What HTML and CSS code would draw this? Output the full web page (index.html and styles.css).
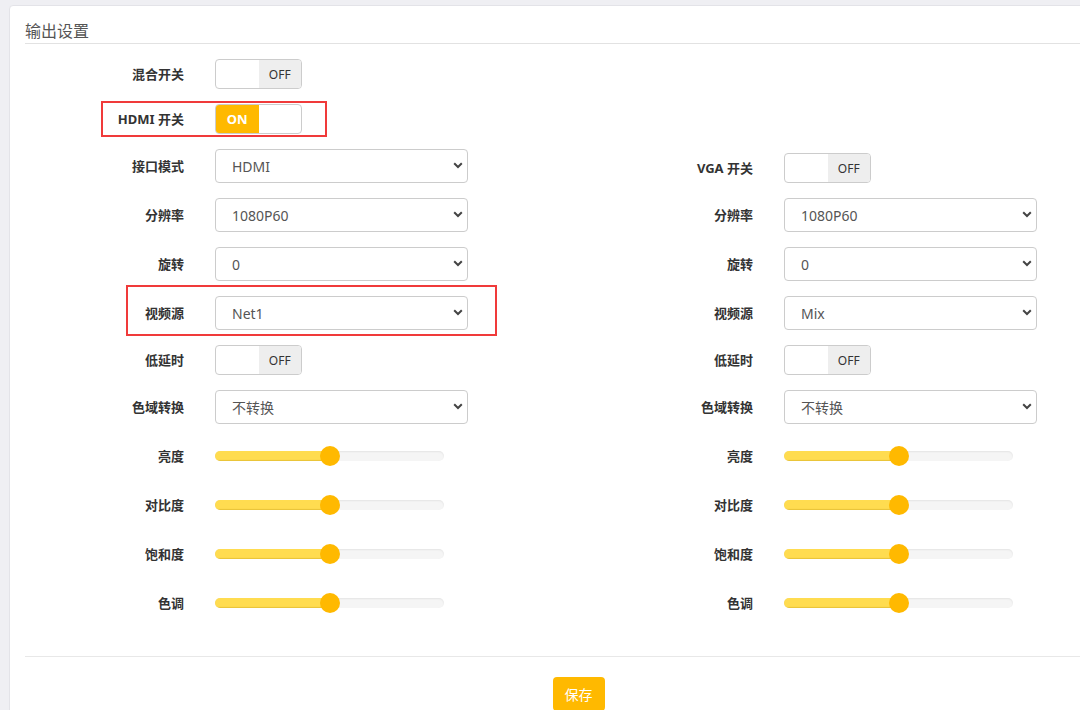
FILE: index.html
```html
<!DOCTYPE html>
<html>
	<head>
		<title>输出设置</title><meta charset="utf-8">
		<link rel="stylesheet" href="styles.css">
	</head>
	<body>
		<div class="card">
			<h4 class="card-title">输出设置</h4>

			<div class="form">
				<div class="row">
					<div class="field">
						<label>混合开关</label>
						<span class="switch"><span class="blank"></span><span class="off">OFF</span></span>
					</div>
				</div>

				<div class="row">
					<div class="field mark-hdmi">
						<label>HDMI 开关</label>
						<span class="switch"><span class="on">ON</span><span class="blank"></span></span>
					</div>
				</div>

				<div class="row">
					<div class="field">
						<label>接口模式</label>
						<div class="select-wrap">
							<select><option>HDMI</option></select>
							<svg class="chev" width="10" height="7" viewBox="0 0 10 7"><path d="M1.2 1.3 L5 5 L8.8 1.3" fill="none" stroke="#444" stroke-width="2"/></svg>
						</div>
					</div>
					<div class="field">
						<label>VGA 开关</label>
						<span class="switch"><span class="blank"></span><span class="off">OFF</span></span>
					</div>
				</div>

				<div class="row">
					<div class="field">
						<label>分辨率</label>
						<div class="select-wrap">
							<select><option>1080P60</option></select>
							<svg class="chev" width="10" height="7" viewBox="0 0 10 7"><path d="M1.2 1.3 L5 5 L8.8 1.3" fill="none" stroke="#444" stroke-width="2"/></svg>
						</div>
					</div>
					<div class="field">
						<label>分辨率</label>
						<div class="select-wrap">
							<select><option>1080P60</option></select>
							<svg class="chev" width="10" height="7" viewBox="0 0 10 7"><path d="M1.2 1.3 L5 5 L8.8 1.3" fill="none" stroke="#444" stroke-width="2"/></svg>
						</div>
					</div>
				</div>

				<div class="row">
					<div class="field">
						<label>旋转</label>
						<div class="select-wrap">
							<select><option>0</option></select>
							<svg class="chev" width="10" height="7" viewBox="0 0 10 7"><path d="M1.2 1.3 L5 5 L8.8 1.3" fill="none" stroke="#444" stroke-width="2"/></svg>
						</div>
					</div>
					<div class="field">
						<label>旋转</label>
						<div class="select-wrap">
							<select><option>0</option></select>
							<svg class="chev" width="10" height="7" viewBox="0 0 10 7"><path d="M1.2 1.3 L5 5 L8.8 1.3" fill="none" stroke="#444" stroke-width="2"/></svg>
						</div>
					</div>
				</div>

				<div class="row">
					<div class="field mark-src">
						<label>视频源</label>
						<div class="select-wrap">
							<select><option>Net1</option></select>
							<svg class="chev" width="10" height="7" viewBox="0 0 10 7"><path d="M1.2 1.3 L5 5 L8.8 1.3" fill="none" stroke="#444" stroke-width="2"/></svg>
						</div>
					</div>
					<div class="field">
						<label>视频源</label>
						<div class="select-wrap">
							<select><option>Mix</option></select>
							<svg class="chev" width="10" height="7" viewBox="0 0 10 7"><path d="M1.2 1.3 L5 5 L8.8 1.3" fill="none" stroke="#444" stroke-width="2"/></svg>
						</div>
					</div>
				</div>

				<div class="row">
					<div class="field">
						<label>低延时</label>
						<span class="switch"><span class="blank"></span><span class="off">OFF</span></span>
					</div>
					<div class="field">
						<label>低延时</label>
						<span class="switch"><span class="blank"></span><span class="off">OFF</span></span>
					</div>
				</div>

				<div class="row">
					<div class="field">
						<label>色域转换</label>
						<div class="select-wrap">
							<select><option>不转换</option></select>
							<svg class="chev" width="10" height="7" viewBox="0 0 10 7"><path d="M1.2 1.3 L5 5 L8.8 1.3" fill="none" stroke="#444" stroke-width="2"/></svg>
						</div>
					</div>
					<div class="field">
						<label>色域转换</label>
						<div class="select-wrap">
							<select><option>不转换</option></select>
							<svg class="chev" width="10" height="7" viewBox="0 0 10 7"><path d="M1.2 1.3 L5 5 L8.8 1.3" fill="none" stroke="#444" stroke-width="2"/></svg>
						</div>
					</div>
				</div>

				<div class="row slide-row">
					<div class="field">
						<label>亮度</label>
						<div class="slider"><div class="track"><div class="fill" style="width: 50%"></div></div><span class="thumb" style="left: 50%"></span></div>
					</div>
					<div class="field">
						<label>亮度</label>
						<div class="slider"><div class="track"><div class="fill" style="width: 50%"></div></div><span class="thumb" style="left: 50%"></span></div>
					</div>
				</div>

				<div class="row slide-row">
					<div class="field">
						<label>对比度</label>
						<div class="slider"><div class="track"><div class="fill" style="width: 50%"></div></div><span class="thumb" style="left: 50%"></span></div>
					</div>
					<div class="field">
						<label>对比度</label>
						<div class="slider"><div class="track"><div class="fill" style="width: 50%"></div></div><span class="thumb" style="left: 50%"></span></div>
					</div>
				</div>

				<div class="row slide-row">
					<div class="field">
						<label>饱和度</label>
						<div class="slider"><div class="track"><div class="fill" style="width: 50%"></div></div><span class="thumb" style="left: 50%"></span></div>
					</div>
					<div class="field">
						<label>饱和度</label>
						<div class="slider"><div class="track"><div class="fill" style="width: 50%"></div></div><span class="thumb" style="left: 50%"></span></div>
					</div>
				</div>

				<div class="row slide-row">
					<div class="field">
						<label>色调</label>
						<div class="slider"><div class="track"><div class="fill" style="width: 50%"></div></div><span class="thumb" style="left: 50%"></span></div>
					</div>
					<div class="field">
						<label>色调</label>
						<div class="slider"><div class="track"><div class="fill" style="width: 50%"></div></div><span class="thumb" style="left: 50%"></span></div>
					</div>
				</div>
			</div>

			<div class="footer">
				<button class="save">保存</button>
			</div>
		</div>
	</body>
</html>
```

FILE: styles.css
```css
html, body { overflow: hidden; }
body {
	margin: 0;
	background: #efeff3;
	font-family: "Noto Sans", "Noto Sans CJK SC", sans-serif;
	color: #333;
}

.card {
	box-sizing: border-box;
	width: 1139px;
	min-height: 760px;
	margin: 5px 0 0 9px;
	padding: 0 15px;
	background: white;
	border: 1px solid #e3e3e8;
	border-radius: 4px;
}
.card-title {
	margin: 0;
	padding-top: 14px;
	line-height: 23px;
	font-size: 16px;
	font-weight: normal;
	color: #555;
	border-bottom: 1px solid #e2e2e2;
}

.form { margin-top: 15px; padding-bottom: 1px; }
.row {
	display: grid;
	grid-template-columns: 569px 569px;
	align-items: end;
	margin-bottom: 15px;
}
.field {
	position: relative;
	display: grid;
	grid-template-columns: 159px auto;
	column-gap: 31px;
	align-items: center;
	justify-items: start;
}
.field label {
	justify-self: end;
	font-size: 13px;
	line-height: 20px;
	font-weight: bold;
	color: #333;
}

/* red annotation boxes */
.mark-hdmi::after, .mark-src::after {
	content: "";
	position: absolute;
	border: 2px solid #f03a3a;
}
.mark-hdmi::after { left: 76px; right: 267px; top: -3px; bottom: -3px; }
.mark-src::after { left: 101px; right: 97px; top: -11px; bottom: -6px; }

.switch {
	box-sizing: border-box;
	display: flex;
	width: 87px;
	height: 30px;
	border: 1px solid #ccc;
	border-radius: 4px;
	overflow: hidden;
	font-size: 12px;
}
.switch span { width: 50%; display: flex; align-items: center; justify-content: center; }
.switch .off { background: #eee; color: #333; }
.switch .on { background: #ffb900; color: white; font-weight: bold; font-size: 13px; }

.select-wrap { position: relative; width: 253px; }
.select-wrap select {
	box-sizing: border-box;
	width: 100%;
	height: 34px;
	padding: 0 16px;
	border: 1px solid #ccc;
	border-radius: 4px;
	background: white;
	color: #555;
	font-family: inherit;
	font-size: 14px;
	appearance: none;
	-webkit-appearance: none;
}
.chev { position: absolute; right: 5px; top: 13px; }

.slide-row { height: 34px; align-items: center; }
.slider { position: relative; width: 229px; height: 20px; display: flex; align-items: center; }
.track {
	width: 100%;
	height: 10px;
	border-radius: 5px;
	background: #f5f5f5;
	box-shadow: inset 0 1px 2px rgba(0,0,0,.07);
	overflow: hidden;
}
.fill { height: 100%; background: #ffdc50; box-shadow: inset 0 -1px 1px rgba(180,140,0,.3); }
.thumb {
	position: absolute;
	top: 0;
	width: 20px;
	height: 20px;
	margin-left: -10px;
	border-radius: 50%;
	background: #ffb900;
}

.footer {
	margin-top: 20px;
	padding-top: 20px;
	border-top: 1px solid #e8e8e8;
	text-align: center;
}
.save {
	height: 34px;
	padding: 0 12px;
	border: none;
	border-radius: 4px;
	background: #ffb900;
	color: white;
	font-family: inherit;
	font-size: 14px;
}
```
